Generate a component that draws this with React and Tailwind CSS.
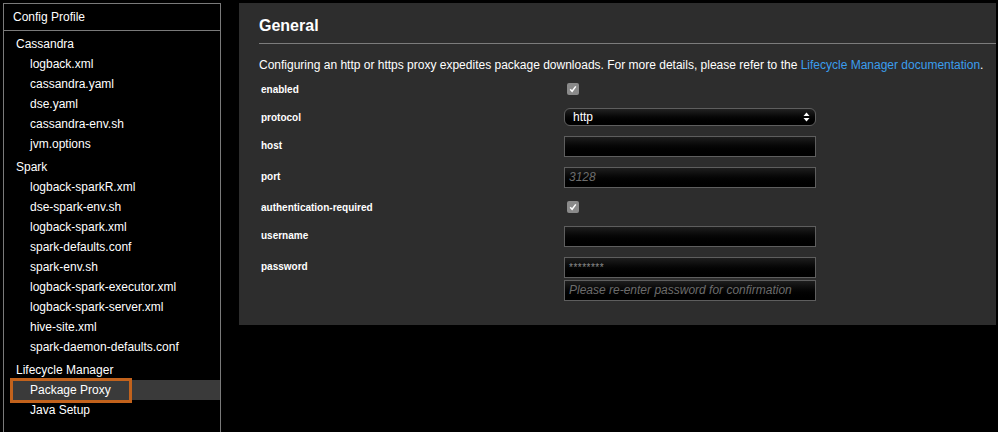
import React from 'react';

const groups = [
  {
    name: 'Cassandra',
    items: ['logback.xml', 'cassandra.yaml', 'dse.yaml', 'cassandra-env.sh', 'jvm.options'],
  },
  {
    name: 'Spark',
    items: [
      'logback-sparkR.xml',
      'dse-spark-env.sh',
      'logback-spark.xml',
      'spark-defaults.conf',
      'spark-env.sh',
      'logback-spark-executor.xml',
      'logback-spark-server.xml',
      'hive-site.xml',
      'spark-daemon-defaults.conf',
    ],
  },
  {
    name: 'Lifecycle Manager',
    items: ['Package Proxy', 'Java Setup'],
  },
];

const inputCls =
  'w-[252px] h-[21px] border border-[#5e5e5e] bg-gradient-to-b from-[#1e1e1e] to-black px-[4px] text-[12px] leading-[19px]';

function Checkbox() {
  return (
    <div className="ml-[3px] flex h-[12px] w-[12px] items-center justify-center rounded-[2px] bg-[#8a8a8a]">
      <svg width="8" height="8" viewBox="0 0 8 8">
        <path d="M1.2 4.3 L3.1 6.3 L6.8 1.4" fill="none" stroke="white" strokeWidth="1.5" />
      </svg>
    </div>
  );
}

function Label({ children, pt = 'pt-0', lh = 'leading-[12px]' }) {
  return (
    <div className={`w-[305px] shrink-0 translate-y-[1px] pl-[2px] text-[10px] font-bold text-white ${pt} ${lh}`}>
      {children}
    </div>
  );
}

function Sidebar() {
  return (
    <div className="ml-[3px] h-[440px] w-[218px] shrink-0 border-x border-t border-[#7a7a7a]">
      <div className="h-[27px] border-b border-[#7a7a7a] pl-[9px] text-[12px] leading-[27px] text-white">
        Config Profile
      </div>
      <div className="pt-[3px]">
        {groups.map((g, gi) => (
          <div key={g.name} className={gi > 0 ? 'mt-[3px]' : ''}>
            <div className="h-[20px] pl-[12px] text-[12px] leading-[20px] text-white">{g.name}</div>
            {g.items.map((item) => {
              const active = item === 'Package Proxy';
              return (
                <div
                  key={item}
                  className={`relative h-[20px] text-[12px] leading-[20px] text-white ${
                    active ? 'ml-[6px] bg-[#3a3a3a] pl-[20px]' : 'pl-[26px]'
                  }`}
                >
                  {item}
                  {active && (
                    <div className="absolute left-0 top-[-2px] h-[25px] w-[122px] border-[3px] border-[#c2621c]" />
                  )}
                </div>
              );
            })}
          </div>
        ))}
      </div>
    </div>
  );
}

function Panel() {
  return (
    <div className="ml-[18px] w-[757px] self-start bg-[#2d2d2d] pb-[24px] text-white">
      <div className="pl-[20px] pt-[13px]">
        <div className="text-[16px] font-bold leading-[20px]">General</div>
      </div>
      <div className="ml-[20px] mt-[7px] border-t border-[#7c7c7c]" />
      <div className="pl-[20px]">
        <p className="mt-[13px] whitespace-nowrap text-[12px] leading-[16px]">
          Configuring an http or https proxy expedites package downloads. For more details, please refer to the{' '}
          <span className="text-[#3b9ded]">Lifecycle Manager documentation</span>.
        </p>

        <div className="mt-[10px] flex">
          <Label>enabled</Label>
          <div className="w-[252px]">
            <Checkbox />
          </div>
        </div>

        <div className="mt-[13px] flex">
          <Label lh="leading-[18px]">protocol</Label>
          <div className="flex h-[18px] w-[252px] items-center justify-between rounded-[6px] border border-[#5e5e5e] bg-gradient-to-b from-[#222] to-black pl-[8px] pr-[5px]">
            <span className="text-[12px] leading-[16px] text-white">http</span>
            <svg width="7" height="10" viewBox="0 0 7 10">
              <path d="M3.5 0.5 L6.5 4 L0.5 4 Z" fill="white" />
              <path d="M3.5 9.5 L6.5 6 L0.5 6 Z" fill="white" />
            </svg>
          </div>
        </div>

        <div className="mt-[10px] flex">
          <Label pt="pt-[3px]">host</Label>
          <div className={inputCls} />
        </div>

        <div className="mt-[10px] flex">
          <Label pt="pt-[3px]">port</Label>
          <div className={`${inputCls} italic text-[#6c6c6c]`}>3128</div>
        </div>

        <div className="mt-[13px] flex">
          <Label>authentication-required</Label>
          <div className="w-[252px]">
            <Checkbox />
          </div>
        </div>

        <div className="mt-[13px] flex">
          <Label pt="pt-[3px]">username</Label>
          <div className={inputCls} />
        </div>

        <div className="mt-[10px] flex">
          <Label pt="pt-[3px]">password</Label>
          <div className="flex flex-col gap-[2px]">
            <div className={`${inputCls} !text-[10px] tracking-[0.5px] text-[#8a8a8a]`}>********</div>
            <div className={`${inputCls} italic text-[#6c6c6c]`}>Please re-enter password for confirmation</div>
          </div>
        </div>
      </div>
    </div>
  );
}

export default function App() {
  return (
    <div
      className="flex h-[432px] w-[998px] overflow-hidden bg-black pt-[3px]"
      style={{ fontFamily: '"Liberation Sans", Arial, sans-serif' }}
    >
      <Sidebar />
      <Panel />
    </div>
  );
}
